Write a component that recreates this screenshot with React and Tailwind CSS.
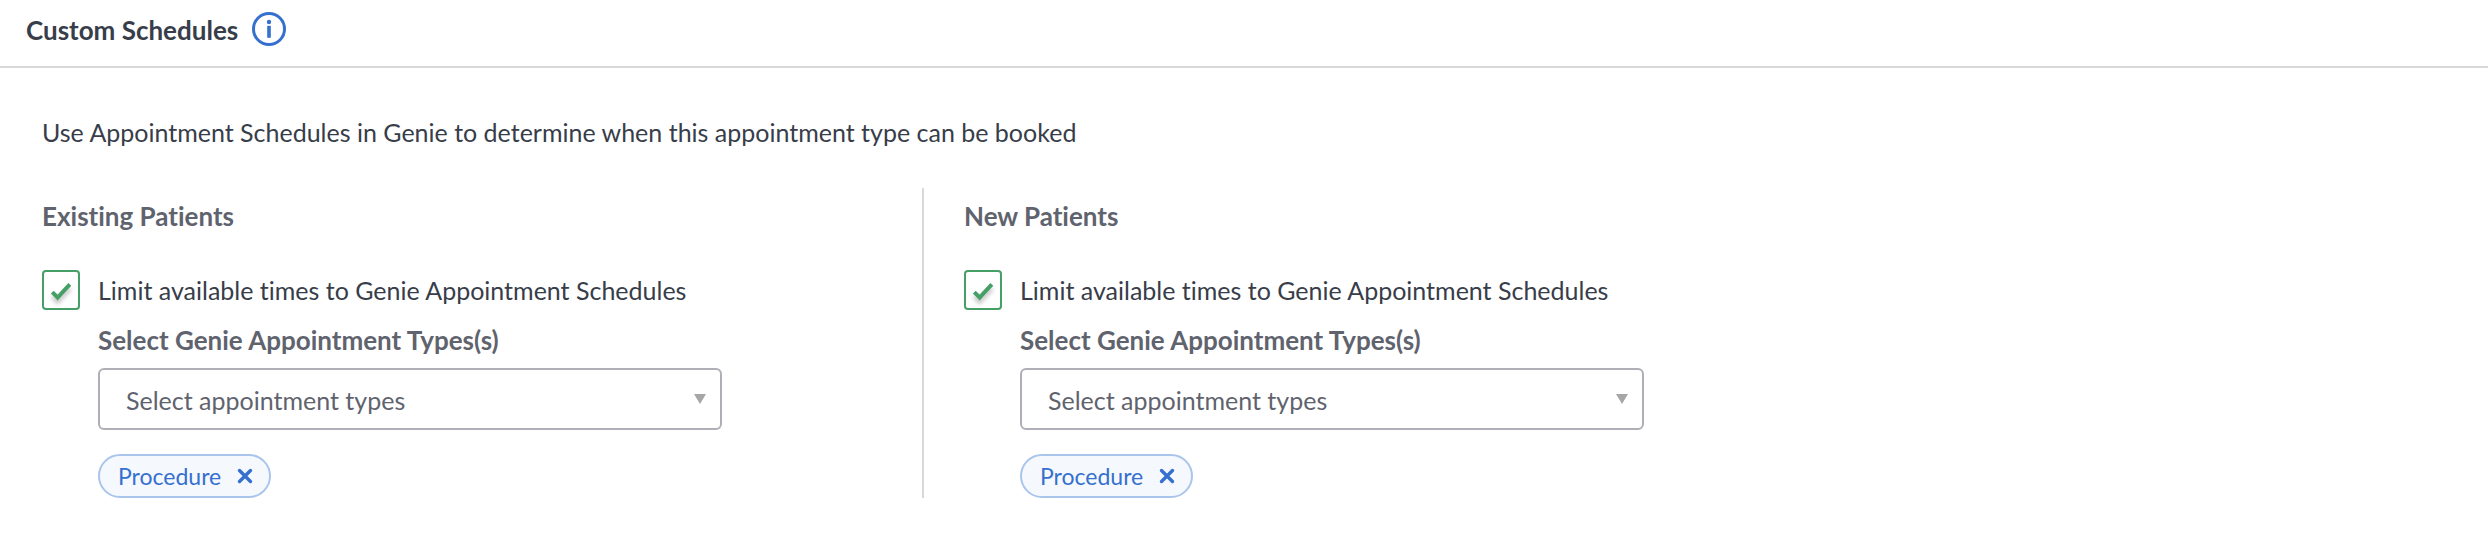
import { useState } from "react"

const APPOINTMENT_TYPES = ["Procedure", "Consultation", "Follow up"]

function InfoIcon() {
  return (
    <svg width="34" height="34" viewBox="0 0 34 34" aria-hidden="true">
      <circle cx="17" cy="17" r="15.5" fill="none" stroke="#3570cf" strokeWidth="3" />
      <circle cx="17" cy="10" r="2.2" fill="#3570cf" />
      <rect x="15.2" y="13.8" width="3.6" height="12" fill="#3570cf" />
    </svg>
  )
}

function Checkbox({ id, checked, onChange }) {
  return (
    <span className="grid shrink-0">
      <input
        id={id}
        type="checkbox"
        checked={checked}
        onChange={onChange}
        className="peer col-start-1 row-start-1 h-10 w-[38px] appearance-none rounded border-2 border-[#479f68] bg-white"
      />
      <svg
        width="38"
        height="40"
        viewBox="0 0 38 40"
        aria-hidden="true"
        className="pointer-events-none invisible col-start-1 row-start-1 drop-shadow-[0_4px_2px_rgba(0,0,0,0.25)] peer-checked:visible"
      >
        <path d="M10.3 22.2 L15.6 27.5 L27.8 14.3" fill="none" stroke="#479f68" strokeWidth="4" />
      </svg>
    </span>
  )
}

function TypeTag({ name, onRemove }) {
  return (
    <span className="flex h-11 items-center gap-4 rounded-full border-2 border-[#a9c5eb] bg-[#f5f9fe] pr-4 pl-[18px] text-[23px] text-[#3570cf]">
      {name}
      <button type="button" aria-label={`Remove ${name}`} onClick={onRemove}>
        <svg width="16" height="16" viewBox="0 0 16 16" aria-hidden="true">
          <path d="M2.5 2.5 L13.5 13.5 M13.5 2.5 L2.5 13.5" stroke="#3570cf" strokeWidth="3.4" strokeLinecap="round" />
        </svg>
      </button>
    </span>
  )
}

function PatientSchedule({ id, title, className }) {
  const [limited, setLimited] = useState(true)
  const [selected, setSelected] = useState(["Procedure"])

  const addType = (e) => setSelected([...selected, e.target.value])
  const removeType = (name) => setSelected(selected.filter((t) => t !== name))

  return (
    <section className={className}>
      <h3 className="pt-3 text-[26px] leading-8 font-bold text-[#5f636e]">{title}</h3>

      <div className="mt-[38px] flex items-center gap-[18px]">
        <Checkbox id={`${id}-limit`} checked={limited} onChange={() => setLimited(!limited)} />
        <label htmlFor={`${id}-limit`}>Limit available times to Genie Appointment Schedules</label>
      </div>

      <div className="mt-[14px] pl-14">
        <label htmlFor={`${id}-types`} className="block text-[26px] leading-8 font-bold text-[#5f636e]">
          Select Genie Appointment Types(s)
        </label>
        <div className="relative mt-3 max-w-[624px]">
          <select
            id={`${id}-types`}
            value=""
            onChange={addType}
            className="block w-full appearance-none rounded-md border-2 border-[#afb0b7] bg-white px-[26px] pt-[14px] pb-3 text-[#5f636e]"
          >
            <option value="">Select appointment types</option>
            {APPOINTMENT_TYPES.filter((t) => !selected.includes(t)).map((t) => (
              <option key={t} value={t}>{t}</option>
            ))}
          </select>
          <svg
            width="12"
            height="10"
            viewBox="0 0 12 10"
            aria-hidden="true"
            className="pointer-events-none absolute top-[26px] right-4"
          >
            <path d="M0 0 H12 L6 10 Z" fill="#a6a6a6" />
          </svg>
        </div>
        <div className="mt-6 flex flex-wrap gap-3">
          {selected.map((t) => (
            <TypeTag key={t} name={t} onRemove={() => removeType(t)} />
          ))}
        </div>
      </div>
    </section>
  )
}

export default function App() {
  return (
    <div className="bg-white font-['Lato',sans-serif] text-[25px] leading-8 text-[#373d49] [font-variant-ligatures:none]">
      <header className="flex items-start gap-[14px] border-b-2 border-[#d8d8d8] px-[26px] pt-3 pb-[18px]">
        <h2 className="text-[26px] leading-9 font-bold">Custom Schedules</h2>
        <button type="button" aria-label="About custom schedules">
          <InfoIcon />
        </button>
      </header>

      <main className="px-[42px] pt-12 pb-10">
        <p>Use Appointment Schedules in Genie to determine when this appointment type can be booked</p>
        <div className="mt-10 grid max-w-[1760px] grid-cols-2">
          <PatientSchedule id="existing" title="Existing Patients" className="pr-10" />
          <PatientSchedule id="new" title="New Patients" className="border-l-2 border-[#d8d8d8] pl-10" />
        </div>
      </main>
    </div>
  )
}
